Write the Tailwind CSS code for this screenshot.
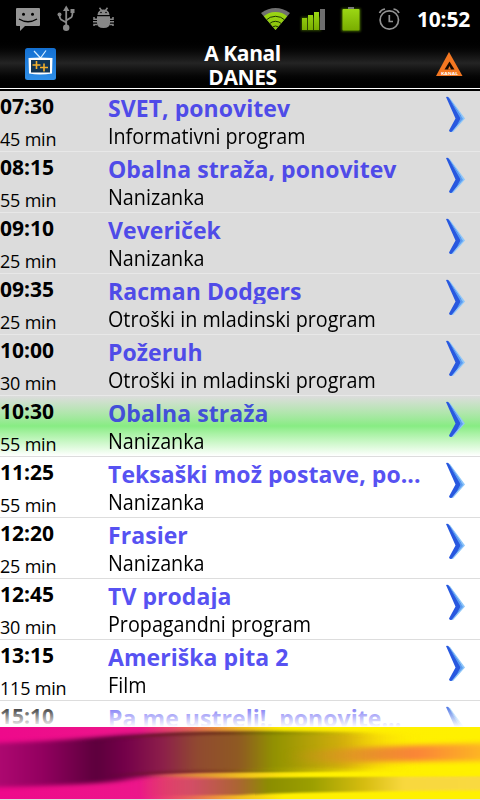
<!DOCTYPE html>
<html lang="sl">
<head>
<meta charset="utf-8">
<title>A Kanal</title>
<script src="https://cdn.jsdelivr.net/npm/@tailwindcss/browser@4"></script>
</head>
<body class="bg-white">
<div class="relative flex h-[800px] w-[480px] flex-col overflow-hidden bg-white font-['Open_Sans','Noto_Sans',sans-serif] text-black">
<div class="flex h-[38px] shrink-0 bg-black">
<svg class="h-[38px] w-[405px] shrink-0" viewBox="0 0 405 38">
<defs>
<linearGradient id="g" x1="0" y1="0" x2="0" y2="1"><stop stop-color="#9bd714"/><stop offset="1" stop-color="#79ad00"/></linearGradient>
<filter id="glow" x="-30%" y="-30%" width="160%" height="160%"><feGaussianBlur stdDeviation="1.300"/></filter>
<clipPath id="wf"><path d="M275.500 30L261 13Q275.500 3 290 13Z"/></clipPath>
</defs>
<path d="M17 8H39Q40 8 40 9V25Q40 26 39 26H25L20 31V26H17Q16 26 16 25V9Q16 8 17 8Z" fill="#959595"/>
<circle cx="23.500" cy="14.300" r="1.500"/><circle cx="32.500" cy="14.300" r="1.500"/>
<path d="M19 19Q28 24.500 37 19" fill="none" stroke="#000" stroke-width="1.400"/>
<g fill="none" stroke="#8a8a8a" stroke-width="1.800"><path d="M66.200 9V26M66.200 22.500L61 19.500Q59.500 18.500 59.500 15M66.200 20.500L71 17.500Q72.500 16.500 72.500 12"/></g>
<path d="M66.200 5.500L69.500 11H63Z" fill="#8a8a8a"/><circle cx="59.500" cy="14.500" r="2" fill="#8a8a8a"/><path d="M70.500 9H74.500V13H70.500Z" fill="#8a8a8a"/><circle cx="66.200" cy="27.800" r="3.200" fill="#8a8a8a"/>
<g fill="#888"><path d="M97.500 15Q98 9.500 103.500 9.500T109.500 15ZM97 16.300H110V23Q110 28 103.500 28T97 23Z"/></g>
<path d="M99.500 7.800L101.500 10.500M107.500 7.800L105.500 10.500M94 17V19.200H97M113 17V19.200H110M93 21.800H97M110 21.800H114M94 26V24.500H97.500M113 26V24.500H109.500" fill="none" stroke="#888" stroke-width="1.500"/>
<circle cx="101" cy="12.500" r=".8"/><circle cx="106" cy="12.500" r=".8"/>
<g clip-path="url(#wf)"><path d="M260 5H291V31H260Z" fill="#707070"/><circle cx="275.500" cy="30" r="18" fill="url(#g)"/><g fill="none" stroke="#1d3800" stroke-width="1"><circle cx="275.500" cy="30" r="13.700"/><circle cx="275.500" cy="30" r="8.700"/><circle cx="275.500" cy="30" r="4"/></g></g>
<path d="M301 17H321V31H301Z" fill="#5d9200" opacity=".5" filter="url(#glow)"/>
<g fill="url(#g)"><path d="M302 18H307V30H302ZM308 15H313V30H308ZM314 12H319V30H314Z"/></g><path d="M320 9H325V30H320Z" fill="#6e6e6e"/>
<path d="M341.500 8.500H360.500V31.500H341.500Z" fill="#5d9200" opacity=".7" filter="url(#glow)"/>
<path d="M348 7H354V10H348Z" fill="#777"/><rect x="342.500" y="9" width="17" height="21.500" rx="1" fill="url(#g)"/>
<g fill="none" stroke="#929292" stroke-width="1.700"><circle cx="389.300" cy="20" r="9.200"/><path d="M389.300 15V21.500H393"/><path d="M379.500 13Q381 9.500 385 9M399 13Q397.500 9.500 393.500 9"/></g>
</svg>
<div class="flex h-[38px] flex-1 items-center pl-[12px] text-[21px] font-bold leading-none tracking-[-0.2px] text-white">10:52</div>
</div>
<div class="flex h-[50px] shrink-0 items-start justify-between bg-linear-to-b from-black via-[#242424] to-black">
<svg class="ml-[25px] mt-[10px] h-8 w-8" viewBox="0 0 32 32">
<defs><linearGradient id="tv" x1="0" y1="0" x2="0" y2="1"><stop stop-color="#1470d2"/><stop offset="1" stop-color="#2f8fe8"/></linearGradient></defs>
<rect width="31" height="32" rx="2.500" fill="url(#tv)"/>
<path d="M9 3L15.500 10L21 2.500" fill="none" stroke="#d6edff" stroke-width="1.200"/>
<path d="M3.500 10Q15 9 27.500 10L27 25.500Q15 27.500 4 25.500Z" fill="#fff"/><path d="M6 12H25V24.500H6Z" fill="#123452"/>
<path d="M11.500 13V21M7.500 17H15.500M19 15.500V23.500M15 19.500H23" stroke="#f3b02c" stroke-width="1.600"/>
</svg>
<div class="mt-[4px] mr-[7px] w-[120px] text-center text-[21px] font-bold leading-[23.500px] tracking-[-0.4px] text-white">A Kanal<br>DANES</div>
<svg class="mt-[13px] mr-[17px] h-[26px] w-[28px]" viewBox="0 0 28 26"><path d="M14 1L27.500 25H1Z" fill="#f47721"/><path d="M14.500 10.500L19.500 18.500H9.500Z" fill="#160800"/><path d="M14.500 15L16 18.500H13Z" fill="#f47721"/><text x="14.500" y="23.700" text-anchor="middle" textLength="17" lengthAdjust="spacingAndGlyphs" font-family="Open Sans" font-size="4" font-weight="bold" fill="#fff">KANAL</text></svg>
</div>
<div class="h-[3px] shrink-0 border-t border-b border-t-white border-b-black bg-black"></div>
<main id="rows" class="relative h-[636px] shrink-0 overflow-hidden"></main>
<svg class="h-[72px] w-[480px] shrink-0" viewBox="0 0 480 72" preserveAspectRatio="none">
<defs>
<linearGradient id="base" gradientUnits="userSpaceOnUse" x1="0" y1="0" x2="480" y2="0"><stop stop-color="#ee098b"/><stop offset=".29" stop-color="#ed168b"/><stop offset=".4" stop-color="#e96858"/><stop offset=".5" stop-color="#f3bd21"/><stop offset=".59" stop-color="#fff000"/><stop offset="1" stop-color="#fff100"/></linearGradient>
<linearGradient id="dark" gradientUnits="userSpaceOnUse" x1="0" y1="0" x2="480" y2="0"><stop stop-color="#ad0870"/><stop offset=".09" stop-color="#92005f"/><stop offset=".2" stop-color="#5c003c"/><stop offset=".26" stop-color="#74004a"/><stop offset=".34" stop-color="#8d1f4a"/><stop offset=".41" stop-color="#904a30"/><stop offset=".5" stop-color="#8f5a22"/><stop offset=".57" stop-color="#909200"/><stop offset=".65" stop-color="#b5a208"/><stop offset=".72" stop-color="#d5b00c"/><stop offset=".8" stop-color="#f2c80c" stop-opacity=".4"/><stop offset=".88" stop-color="#fff100" stop-opacity="0"/></linearGradient>
<linearGradient id="low" gradientUnits="userSpaceOnUse" x1="0" y1="0" x2="480" y2="0"><stop offset=".28" stop-color="#df2171" stop-opacity="0"/><stop offset=".4" stop-color="#d24d66"/><stop offset=".5" stop-color="#a96630"/><stop offset=".56" stop-color="#8b8e00"/><stop offset=".65" stop-color="#9b9f00"/><stop offset=".76" stop-color="#d7bd10"/><stop offset=".84" stop-color="#f8d83e"/><stop offset="1" stop-color="#f9d940"/></linearGradient>
<linearGradient id="edge" gradientUnits="userSpaceOnUse" x1="0" y1="0" x2="480" y2="0"><stop offset=".18" stop-color="#500036" stop-opacity="0"/><stop offset=".32" stop-color="#72152f"/><stop offset=".48" stop-color="#713b18"/><stop offset=".56" stop-color="#777a00"/><stop offset=".78" stop-color="#c3b000" stop-opacity="0"/></linearGradient>
<linearGradient id="line" gradientUnits="userSpaceOnUse" x1="0" y1="0" x2="480" y2="0"><stop offset=".3" stop-color="#d68a45" stop-opacity="0"/><stop offset=".42" stop-color="#dca02f"/><stop offset=".53" stop-color="#f5cf1c"/><stop offset=".65" stop-color="#fff000"/></linearGradient>
<linearGradient id="flame" gradientUnits="userSpaceOnUse" x1="290" y1="0" x2="490" y2="0"><stop stop-color="#c58a20" stop-opacity="0"/><stop offset=".35" stop-color="#e49426"/><stop offset=".63" stop-color="#fb8438"/><stop offset="1" stop-color="#fdbb20"/></linearGradient>
<filter id="b" color-interpolation-filters="sRGB" filterUnits="userSpaceOnUse" x="-50" y="-20" width="580" height="110"><feGaussianBlur stdDeviation="5 2"/></filter>
<filter id="b2" color-interpolation-filters="sRGB" filterUnits="userSpaceOnUse" x="-50" y="-20" width="580" height="110"><feGaussianBlur stdDeviation="7 2.800"/></filter>
<filter id="b3" color-interpolation-filters="sRGB" filterUnits="userSpaceOnUse" x="-50" y="-20" width="580" height="110"><feGaussianBlur stdDeviation="3 .9"/></filter>
</defs>
<rect width="480" height="72" fill="url(#base)"/>
<path d="M-60 18C20 16 65 13 100 10Q150 5 210 4.500Q330 4 430 8V42L340 43L200 46Q155 47 120 54Q60 60 -60 61Z" fill="url(#dark)" filter="url(#b)"/>
<path d="M80 15Q150 7 210 6.500T380 7" fill="none" stroke="url(#edge)" stroke-width="3" filter="url(#b3)"/>
<path d="M110 49Q160 44 230 44T370 43" fill="none" stroke="url(#edge)" stroke-width="3" opacity=".7" filter="url(#b3)"/>
<path d="M290 25Q380 18 530 15V34Q420 34 370 35T290 33Z" fill="url(#flame)" filter="url(#b2)"/>
<path d="M125 53Q250 50 520 49V63Q310 64 240 68L125 69Z" fill="url(#low)" filter="url(#b3)"/>
<path d="M140 49Q240 47 500 47" fill="none" stroke="url(#line)" stroke-width="2.500" filter="url(#b3)"/>
</svg>
<div class="h-px shrink-0 bg-[#ddd]"></div>
<div class="absolute top-[702px] left-0 h-[25px] w-full bg-linear-to-b from-white/0 to-white"></div>
</div>
<script>
const data=[
["07:30","45 min","SVET, ponovitev","Informativni program"],
["08:15","55 min","Obalna straža, ponovitev","Nanizanka"],
["09:10","25 min","Veveriček","Nanizanka"],
["09:35","25 min","Racman Dodgers","Otroški in mladinski program"],
["10:00","30 min","Požeruh","Otroški in mladinski program"],
["10:30","55 min","Obalna straža","Nanizanka"],
["11:25","55 min","Teksaški mož postave, po...","Nanizanka"],
["12:20","25 min","Frasier","Nanizanka"],
["12:45","30 min","TV prodaja","Propagandni program"],
["13:15","115 min","Ameriška pita 2","Film"],
["15:10","100 min","Pa me ustreli!, ponovite...",""]];
const past="bg-[#dcdcdc] border-[#e8e8e8]", now="bg-linear-to-b from-[#dcdcdc] via-[#87ec83] to-white border-[#ddd]", next="bg-white border-[#ddd]";
const titleColor=i=>i<5?"text-[#4f4be8]":i===5?"text-[#4350d8]":"text-[#5752f2]";
document.getElementById("rows").innerHTML=data.map((r,i)=>`<div class="flex h-[61px] border-b ${i<5?past:i===5?now:next}">
<div class="w-[108px] shrink-0"><div class="h-[32px] pt-[3px] text-[21px] font-bold leading-[24px]">${r[0]}</div><div class="pt-[4px] text-[18px] leading-[24px] tracking-[-0.2px] whitespace-nowrap">${r[1]}</div></div>
<div class="w-[338px] shrink-0 whitespace-nowrap"><div class="h-[30px] overflow-hidden pt-[2px] text-[23px] font-bold leading-[30px] tracking-[0.06px] ${titleColor(i)}">${r[2]}</div><div class="w-[360px] origin-left scale-x-[0.897] text-[22px] leading-[28px]">${r[3]}</div></div>
<svg class="mt-[5px] h-[38px] w-[20px]" viewBox="0 0 20 38"><path d="M1 1L4 2L19 22.500L7 36Q5 36 4 34.500L11 23Z" fill="#8fc6f8"/><path d="M0 1Q2 0 3 2L15 20L14.500 25L6 35.500Q4 37 3 34.500L9.500 22.500Z" fill="#2858df"/><path d="M4 4L12 15L17 23L11 29L14.500 22.500Z" fill="#5b9cf1"/></svg>
</div>`).join("");
</script>
</body>
</html>
